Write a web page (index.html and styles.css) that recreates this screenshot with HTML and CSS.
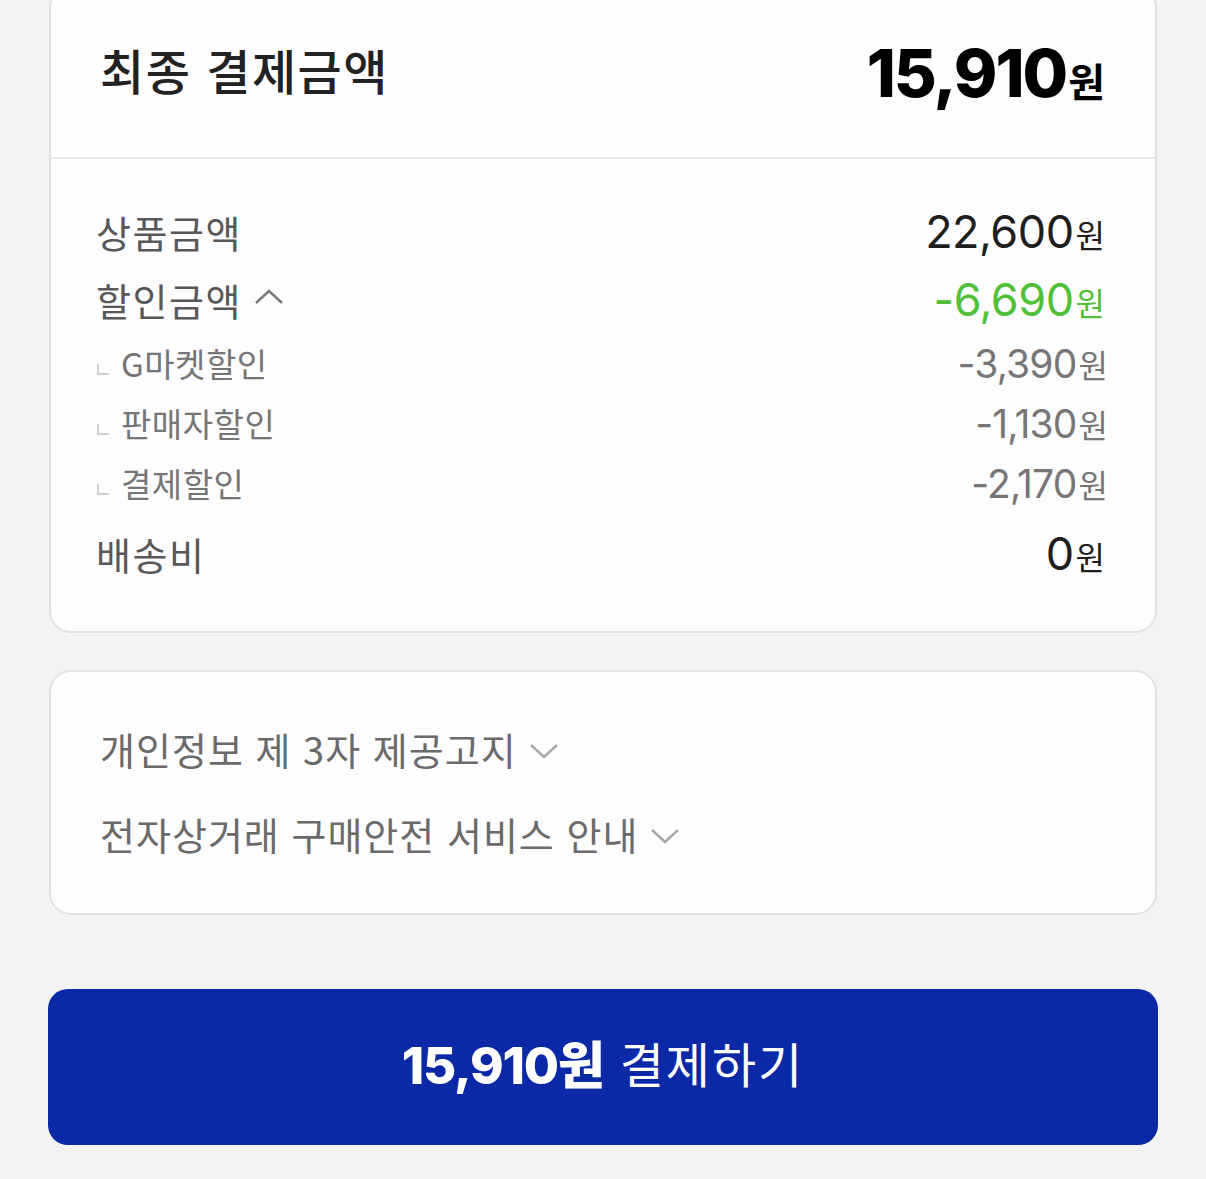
FILE: index.html
```html
<!DOCTYPE html>
<html lang="ko">
<head>
<meta charset="utf-8">
<link rel="stylesheet" href="styles.css">
</head>
<body>
<div class="page">
  <section class="card summary">
    <div class="summary-head">
      <h2 class="title">최종 결제금액</h2>
      <div class="total"><span class="num">15,910</span><span class="won">원</span></div>
    </div>
    <div class="summary-body">
      <div class="row main">
        <span class="label">상품금액</span>
        <span class="val dark"><span class="num">22,600</span><span class="won">원</span></span>
      </div>
      <div class="row main">
        <span class="label">할인금액
          <svg class="chev-up" width="30" height="18" viewBox="0 0 30 18"><path d="M2 15 L15 3 L28 15" fill="none" stroke="#7a7a7a" stroke-width="2.4"/></svg>
        </span>
        <span class="val green"><span class="num">-6,690</span><span class="won">원</span></span>
      </div>
      <div class="row sub">
        <span class="label"><i class="corner"></i>G마켓할인</span>
        <span class="val grey"><span class="num">-3,390</span><span class="won">원</span></span>
      </div>
      <div class="row sub">
        <span class="label"><i class="corner"></i>판매자할인</span>
        <span class="val grey"><span class="num">-1,130</span><span class="won">원</span></span>
      </div>
      <div class="row sub">
        <span class="label"><i class="corner"></i>결제할인</span>
        <span class="val grey"><span class="num">-2,170</span><span class="won">원</span></span>
      </div>
      <div class="row main last">
        <span class="label">배송비</span>
        <span class="val dark"><span class="num">0</span><span class="won">원</span></span>
      </div>
    </div>
  </section>

  <section class="card notices">
    <div class="notice">개인정보 제 3자 제공고지
      <svg class="chev-down" width="30" height="18" viewBox="0 0 30 18"><path d="M2 3 L15 15 L28 3" fill="none" stroke="#a8a8a8" stroke-width="2.4"/></svg>
    </div>
    <div class="notice">전자상거래 구매안전 서비스 안내
      <svg class="chev-down" width="30" height="18" viewBox="0 0 30 18"><path d="M2 3 L15 15 L28 3" fill="none" stroke="#a8a8a8" stroke-width="2.4"/></svg>
    </div>
  </section>

  <button class="pay"><span class="pay-amt">15,910원</span><span class="pay-txt">결제하기</span></button>
</div>
</body>
</html>
```
FILE: styles.css
```css
* { box-sizing: border-box; }
html, body { margin: 0; padding: 0; }
body {
  background: #f3f3f3;
  font-family: "Noto Sans CJK KR", "Noto Sans", sans-serif;
  color: #222;
  overflow: hidden;
}
.page {
  padding: 0 48px;
  display: flex;
  flex-direction: column;
}
.card {
  background: #fdfdfd;
  border: 2px solid #e1e1e1;
  border-radius: 22px;
  margin: 0 1px;
}
.summary { margin-top: -14px; }
.summary-head {
  height: 171px;
  padding: 0 50px 0 49px;
  display: flex;
  align-items: center;
  justify-content: space-between;
  border-bottom: 2px solid #e8e8e8;
}
.title {
  margin: -8px 0 0 0;
  font-size: 48px;
  font-weight: 500;
  color: #222;
  letter-spacing: 1.5px;
}
.total { color: #000; display: flex; align-items: baseline; }
.total .num {
  font-family: "Inter", sans-serif;
  font-size: 66px;
  font-weight: 800;
  letter-spacing: -2px;
}
.total .won {
  font-size: 40px;
  font-weight: 700;
  margin-left: 2px;
}
.summary-body { padding: 38px 50px 44px 45px; }
.row {
  display: flex;
  align-items: center;
  justify-content: space-between;
}
.row.main { height: 68px; }
.row.sub { height: 60px; }
.row.last { margin-top: 6px; }
.label {
  display: flex;
  align-items: center;
  color: #585858;
  font-size: 38px;
  letter-spacing: 1.5px;
}
.row.sub .label {
  font-size: 33px;
  letter-spacing: 0.5px;
  color: #767676;
}
.chev-up { margin-left: 12px; margin-top: -4px; }
.corner {
  display: inline-block;
  width: 12px;
  height: 11px;
  border-left: 2px solid #cfcfcf;
  border-bottom: 2px solid #cfcfcf;
  margin: 12px 12px 0 1px;
}
.val { display: flex; align-items: baseline; }
.val .num {
  font-family: "Inter", sans-serif;
  font-size: 45px;
  font-weight: 400;
  letter-spacing: -0.5px;
}
.val .won { font-size: 32px; margin-left: 2px; }
.val.dark { color: #1e1e1e; }
.val.green { color: #50c038; }
.val.grey { color: #767676; margin-right: -3px; }
.val.grey .num { font-size: 39px; letter-spacing: -0.8px; }
.notices {
  margin-top: 37px;
  padding: 46px 50px 50px 49px;
  display: flex;
  flex-direction: column;
  gap: 25px;
}
.notice {
  height: 60px;
  display: flex;
  align-items: center;
  color: #6a6a6a;
  font-size: 38px;
  letter-spacing: 1px;
}
.chev-down { margin-left: 12px; margin-top: 6px; }
.pay {
  margin-top: 74px;
  height: 156px;
  border: none;
  border-radius: 20px;
  background: #0b28a7;
  color: #fff;
  display: flex;
  align-items: center;
  justify-content: center;
  font-family: "Noto Sans CJK KR", sans-serif;
  padding: 0 0 10px 0;
}
.pay-amt {
  font-family: "Inter", "Noto Sans CJK KR", sans-serif;
  font-size: 51px;
  font-weight: 800;
  letter-spacing: -1.2px;
}
.pay-txt {
  font-size: 48px;
  font-weight: 400;
  letter-spacing: 2px;
  margin-left: 16px;
}
```
